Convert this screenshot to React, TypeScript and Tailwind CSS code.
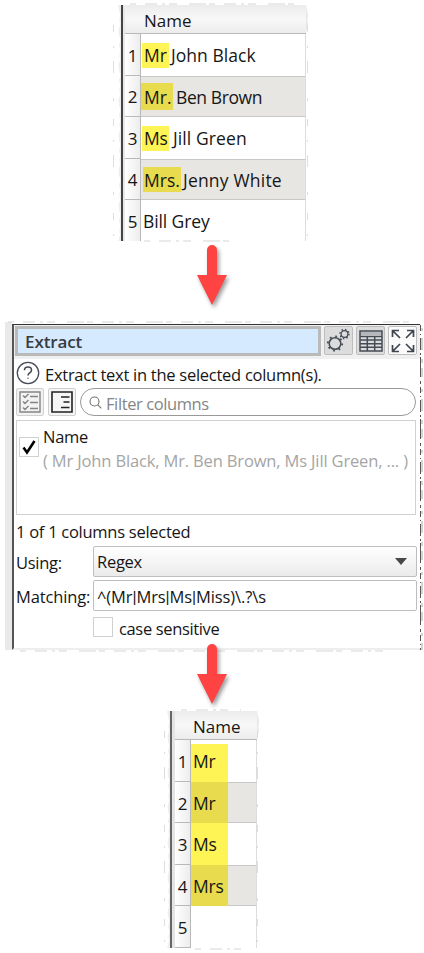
import React from 'react';

type Row = { title?: string; rest?: string; mark?: string; gap?: string };

const people: Row[] = [
    { title: 'Mr', rest: 'John Black', mark: 'ml-px w-[27px] h-[25px] pl-[2px]', gap: 'ml-[2px] tracking-[0.05px]' },
    { title: 'Mr.', rest: 'Ben Brown', mark: 'w-[32px] h-[27px] pl-[3px]', gap: 'ml-[3px] tracking-[-0.4px]' },
    { title: 'Ms', rest: 'Jill Green', mark: 'ml-px w-[27px] h-[25px] pl-[2px] tracking-[-0.3px]', gap: 'ml-[4px] tracking-[0.1px]' },
    { title: 'Mrs.', rest: 'Jenny White', mark: 'ml-[2px] w-[38px] h-[25px] pl-px', gap: 'ml-[2px] tracking-[0.2px]' },
    { rest: 'Bill Grey', gap: 'ml-[2px] tracking-[-0.1px]' },
];

const titles = ['Mr', 'Mr', 'Ms', 'Mrs', ''];

const TornSide = ({ height, className, flip }: { height: number; className: string; flip?: boolean }) => {
    const steps = Array.from({ length: Math.floor(height / 5) }, (_, i) => `L${[1, 2.2, 1.4, 2, 0.6, 1, 2.4][i % 7]} ${(i + 1) * 5}`).join(' ');
    return (
        <svg className={`absolute ${className}`} width="6" height={height} fill="none">
            <path d={`M0 0 ${steps} L0 ${height}Z`} fill={flip ? '#e9e9e9' : 'white'} />
        </svg>
    );
};

const TornEdge = ({ height, className }: { height: number; className: string }) => (
    <svg className={`absolute ${className}`} width="3" height={height} fill="none">
        <path d={`M1.5 20V${height}`} stroke="#dedede" strokeDasharray="7 14 2 13 12 25 3 18" />
    </svg>
);

const TornLine = ({ width, className }: { width: number; className: string }) => (
    <svg className={`absolute ${className}`} width={width} height="4" fill="none">
        <path d={`M0 2H${width}`} stroke="#d5d5d5" strokeDasharray="6 9 12 5 3 4 8 12 17 3" />
    </svg>
);

const Arrow = () => (
    <svg className="block overflow-visible drop-shadow-[2px_3px_2px_rgba(0,0,0,0.4)]" width="30" height="60" viewBox="0 0 30 60">
        <path d="M10 31V5a5 5 0 0 1 10 0v25h10L15 60 0 30h10z" fill="#ff4343" />
    </svg>
);

const Gutter = ({ children, className = '' }: { children?: React.ReactNode; className?: string }) => (
    <div className={`w-[16px] shrink-0 border-r border-b border-[#b9b9b9] bg-linear-to-r from-white to-[#ededed] flex items-center justify-center ${className}`}>
        {children}
    </div>
);

const PeopleTable = () => (
    <div className="relative ml-[118px] mt-[5px] w-[188px] h-[236px] flex text-[17.5px]">
        <div className="w-[3px] bg-[#eeeeee]" />
        <div className="w-[1.5px] bg-[#444]" />
        <div className="w-[2.5px] bg-[#e8e8e8]" />
        <div className="flex-1 overflow-hidden">
            <div className="h-[29px] border-b border-[#b9b9b9] bg-linear-to-b from-[#ececec] via-[#f8f8f8] to-[#ececec] pl-[19px] text-[17px] leading-[31px]">Name</div>
            {people.map((row, i) => (
                <div key={i} className="flex h-[41.5px]">
                    <Gutter className="pt-[3px] text-[17px]">{i + 1}</Gutter>
                    <div className={`flex flex-1 items-center whitespace-nowrap border-r border-[#dddddd] pt-px ${i % 2 ? 'border-y border-y-[#c8c8c8] bg-[#e8e6e2]' : ''}`}>
                        {row.title && (
                            <span className={`flex items-center ${i % 2 ? 'bg-[#e8dc4e]' : 'bg-[#fff455]'} ${row.mark}`}>{row.title}</span>
                        )}
                        <span className={row.gap}>{row.rest}</span>
                    </div>
                </div>
            ))}
        </div>
        <TornSide height={236} className="left-0 top-0" />
        <TornSide height={29} className="-right-[6px] top-0" flip />
        <TornEdge height={236} className="-left-[6px] top-0" />
        <TornEdge height={236} className="-right-[3px] top-0" />
        <TornLine width={165} className="left-[12px] -top-[3px]" />
        <TornLine width={90} className="left-[26px] -bottom-[2px]" />
    </div>
);

const ResultTable = () => (
    <div className="relative ml-[167px] mt-[7px] w-[90px] h-[237px] flex text-[17.5px]">
        <div className="w-[3px] bg-[#eeeeee]" />
        <div className="w-[2px] bg-[#666]" />
        <div className="w-[3px] bg-[#e4e4e4]" />
        <div className="flex-1 overflow-hidden">
            <div className="h-[29px] border-b border-[#b9b9b9] bg-linear-to-b from-[#ececec] via-[#f8f8f8] to-[#ececec] pl-[18px] text-[17px] leading-[32px]">Name</div>
            {titles.map((title, i) => (
                <div key={i} className="flex h-[41.5px]">
                    <Gutter className="pt-[4px] text-[17px]">{i + 1}</Gutter>
                    <div className={`flex flex-1 border-r border-[#dddddd] ${i % 2 ? 'border-y border-y-[#c8c8c8] bg-[#e8e6e2]' : ''}`}>
                        {title && (
                            <span className={`flex w-[37px] items-center pl-[2px] tracking-[-0.2px] ${i % 2 ? '-my-px bg-[#e8dc4e]' : 'bg-[#fff455]'} ${i === 0 ? 'mt-[4px] pb-[3px]' : 'pt-px'}`}>{title}</span>
                        )}
                    </div>
                </div>
            ))}
        </div>
        <TornSide height={237} className="left-0 top-0" />
        <TornSide height={29} className="-right-[6px] top-0" flip />
        <TornEdge height={237} className="-left-[4px] top-0" />
        <TornEdge height={237} className="-right-[2px] top-0" />
        <TornLine width={60} className="left-[14px] -top-[3px]" />
        <TornLine width={46} className="left-[28px] -bottom-[3px]" />
    </div>
);

const GearIcon = () => (
    <svg width="25" height="25" viewBox="0 0 25 25" className="shrink-0" fill="none" stroke="#454b57">
        <circle cx="9" cy="15.5" r="5.8" strokeWidth="1.5" />
        <circle cx="9" cy="15.5" r="7.2" strokeWidth="1.8" strokeDasharray="1.8 3.855" />
        <circle cx="18.5" cy="6" r="3.4" strokeWidth="1.3" />
        <circle cx="18.5" cy="6" r="4.5" strokeWidth="1.5" strokeDasharray="1.4 2.134" />
    </svg>
);

const TableIcon = () => (
    <svg width="24" height="22" viewBox="0 0 24 22" className="shrink-0" fill="none" stroke="#454b57" strokeWidth="1.5">
        <path d="M1 3.5h22" stroke="#b4b7bc" strokeWidth="3" />
        <path d="M1 1h22v20H1zM1 6.5h22M1 10h22M1 13.7h22M1 17.3h22M8.3 6.5V21M15.7 6.5V21" />
    </svg>
);

const ExpandIcon = () => (
    <svg width="24" height="24" viewBox="0 0 24 24" className="shrink-0" fill="none" stroke="#3f4652" strokeWidth="1.7">
        <path d="M1.5 8V1.5H8M1.5 1.5 9 9M16 1.5h6.5V8M22.5 1.5 15 9M1.5 16v6.5H8M1.5 22.5 9 15M16 22.5h6.5V16M22.5 22.5 15 15" />
    </svg>
);

const ToolButton = ({ children, light }: { children: React.ReactNode; light?: boolean }) => (
    <div className={`flex h-[29px] w-[29px] shrink-0 items-center justify-center rounded-[2px] border border-[#bdbdbd] ${light ? 'bg-[#fbfbfb]' : 'bg-[#dcdcdc]'}`}>{children}</div>
);

// Roboto has a much narrower pipe than Open Sans
const Bar = () => <span className="font-['Roboto',sans-serif]">|</span>;

const ExtractPanel = () => (
    <div className="relative ml-[5px] mt-[17px] flex h-[328px] w-[415px] text-[16.5px] tracking-[-0.27px]">
        <div className="w-[7px] bg-[#e9e9e9]" />
        <div className="mt-[2px] flex-1 border-l-2 border-t border-l-[#555] border-t-[#333] border-b-2 border-b-[#eeeeee]">
            <div className="flex h-[34px] gap-[3px] bg-[#f0f0f0] pl-px pt-px">
                <div className="h-[30px] w-[306px] shrink-0 border-[3px] border-[#bababa] bg-[#d5e9ff] pl-[7px] text-[17px] font-semibold leading-[26px] text-[#383b40] tracking-[-0.1px]">Extract</div>
                <ToolButton><GearIcon /></ToolButton>
                <ToolButton><TableIcon /></ToolButton>
                <ToolButton light><ExpandIcon /></ToolButton>
            </div>
            <div className="flex h-[28px] items-center pl-[2px]">
                <svg width="24" height="24" viewBox="0 0 24 24" fill="none" stroke="#454b57" strokeWidth="1.3">
                    <circle cx="12" cy="12" r="10.7" />
                    <path d="M8.5 9.2c0-4.2 7-4.2 7 0 0 2.8-3.5 2.6-3.5 5.3" strokeWidth="1.6" />
                    <circle cx="12" cy="17.3" r=".7" fill="#454b57" stroke="none" />
                </svg>
                <span className="ml-[5px] mt-[4px] whitespace-nowrap">Extract text in the selected column(s).</span>
            </div>
            <div className="mt-px flex h-[28px] pl-[2px]">
                <div className="flex h-[28px] w-[28px] items-center justify-center rounded-[2px] border border-[#d0d0d0] bg-[#f2f2f2]">
                    <svg width="22" height="22" viewBox="0 0 22 22" fill="none" stroke="#858585" strokeWidth="1.4">
                        <path d="M1 1h20v20H1zM11 5.5h8M11 11.5h8M11 17.5h8M4 4.5l2 2 3.5-3.5M4 10.5l2 2 3.5-3.5M4 16.5l2 2 3.5-3.5" />
                    </svg>
                </div>
                <div className="ml-[4px] flex h-[28px] w-[28px] items-center justify-center rounded-[2px] border border-[#d0d0d0] bg-[#f5f5f5]">
                    <svg width="22" height="22" viewBox="0 0 22 22" fill="none" stroke="#222" strokeWidth="1.6">
                        <path d="M1 1h20v20H1zM10 6h8.5M12.5 11h6M10 16.5h8.5" />
                    </svg>
                </div>
                <div className="ml-[4px] flex h-[28px] w-[336px] items-center rounded-full border border-[#999] bg-white pl-[8px] text-[#858585]">
                    <svg width="13" height="13" viewBox="0 0 13 13" fill="none" stroke="#707070" strokeWidth="1.1">
                        <circle cx="5.5" cy="5.5" r="4.5" />
                        <path d="M8.8 8.8 12.3 12.3" />
                    </svg>
                    <span className="ml-[4px] mt-[3px] tracking-[-0.4px]">Filter columns</span>
                </div>
            </div>
            <div className="ml-[2px] mt-[4px] flex h-[95px] w-[400px] border border-[#d0d0d0] pl-[2px]">
                <div className="mt-[16px] flex h-[20px] w-[20px] items-center justify-center border border-[#d0d0d0]">
                    <svg width="14" height="15" viewBox="0 0 14 15" fill="none" stroke="#000" strokeWidth="2.6"><path d="m1.5 7.5 3.5 5L12.5 1" /></svg>
                </div>
                <div className="ml-[4px] mt-[4px] whitespace-nowrap leading-[24px]">
                    <div>Name</div>
                    <div className="text-[#a5a5a5] tracking-[-0.15px]">( Mr John Black, Mr. Ben Brown, Ms Jill Green, ... )</div>
                </div>
            </div>
            <div className="ml-[2px] mt-[4px] h-[26px] leading-[26px]">1 of 1 columns selected</div>
            <div className="ml-[2px] mt-px flex h-[31px]">
                <span className="w-[77px] leading-[34px]">Using:</span>
                <div className="flex w-[324px] items-center justify-between rounded-[2px] border border-[#bebebe] bg-linear-to-b from-white to-[#ebebeb] pl-[3px] pr-[9px]">
                    <span className="mt-px">Regex</span>
                    <svg width="12" height="7"><path d="M0 0h12L6 7z" fill="#484848" /></svg>
                </div>
            </div>
            <div className="ml-[2px] mt-[3px] flex h-[31px]">
                <span className="w-[77px] leading-[33px] tracking-[-0.15px]">Matching:</span>
                <div className="w-[324px] rounded-[2px] border border-[#bebebe] pl-[3px] leading-[31px] tracking-[-0.1px]">
                    ^(Mr<Bar />Mrs<Bar />Ms<Bar />Miss)\.?\s
                </div>
            </div>
            <div className="ml-[79px] mt-[6px] flex h-[20px] items-center">
                <div className="h-[20px] w-[20px] border border-[#d0d0d0]" />
                <span className="ml-[6px] mt-[3px] tracking-[-0.35px]">case sensitive</span>
            </div>
        </div>
        <svg className="absolute -right-[3px] top-0" width="5" height="328" fill="none">
            <path d="M2.5 3V328" stroke="#555" strokeDasharray="6 3 1 3 12 3 2 2 20 4 3 3" />
            <path d="M4 6V328" stroke="#aaa" strokeDasharray="3 7 12 9 4 5 9 12" />
        </svg>
        <TornLine width={407} className="left-[3px] -top-[2px]" />
        <TornLine width={370} className="left-[15px] -bottom-[3px]" />
    </div>
);

export default function App() {
    return (
        <div className="flex h-[953px] w-[424px] flex-col overflow-hidden bg-white font-['Open_Sans','Noto_Sans',sans-serif] text-[17px] leading-[24px] text-[#161616]">
            <PeopleTable />
            <div className="ml-[197px] mt-[4px]"><Arrow /></div>
            <ExtractPanel />
            <div className="relative z-10 ml-[197px] -mt-[6px]"><Arrow /></div>
            <ResultTable />
        </div>
    );
}
